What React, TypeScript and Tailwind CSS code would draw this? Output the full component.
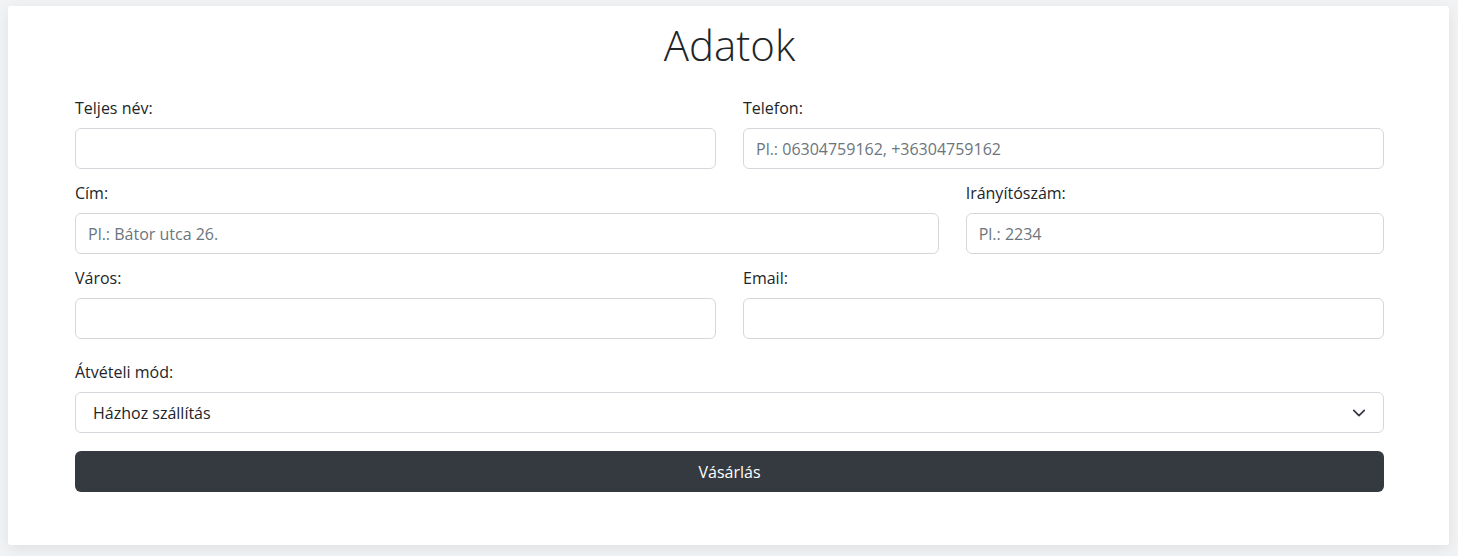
import React from "react";

const font = { fontFamily: '"Open Sans", "Noto Sans", "Liberation Sans", sans-serif' };

function Field({ label, placeholder, span }: { label: string; placeholder?: string; span: string }) {
  return (
    <div className={span}>
      <label className="block text-[16px] leading-6 mb-2 text-[#212529]">{label}</label>
      <input
        type="text"
        placeholder={placeholder}
        className="block w-full h-[41px] rounded-[6px] border border-[#d4d7dc] bg-white px-[12px] text-[16px] text-[#212529] placeholder:text-[#6c757d] outline-none"
      />
    </div>
  );
}

export default function App() {
  return (
    <div className="min-h-screen bg-[#f2f3f5] pt-[6px] pl-[8px] pr-[9px] pb-[11px]" style={font}>
      <div className="bg-white rounded-[3px] shadow-[0_4px_16px_rgba(0,0,0,0.08)] pt-[10px] pl-[67px] pr-[65px] pb-[53px]">
        <h1 className="text-center text-[42px] leading-[58px] font-light text-[#212529] mb-[22px]">Adatok</h1>
        <div className="grid grid-cols-12 gap-x-[27px] gap-y-[12px]">
          <Field span="col-span-6" label="Teljes név:" />
          <Field span="col-span-6" label="Telefon:" placeholder="Pl.: 06304759162, +36304759162" />
          <Field span="col-span-8" label="Cím:" placeholder="Pl.: Bátor utca 26." />
          <Field span="col-span-4" label="Irányítószám:" placeholder="Pl.: 2234" />
          <Field span="col-span-6" label="Város:" />
          <Field span="col-span-6" label="Email:" />
        </div>
        <div className="mt-[21px]">
          <label className="block text-[16px] leading-6 mb-2 text-[#212529]">Átvételi mód:</label>
          <div className="flex items-center justify-between h-[41px] rounded-[6px] border border-[#d4d7dc] bg-white pl-[17px] pr-[17px] text-[16px] text-[#212529]">
            <span>Házhoz szállítás</span>
            <svg width="14" height="14" viewBox="0 0 16 16" fill="none">
              <path d="M2 5l6 6 6-6" stroke="#343a40" strokeWidth="2" strokeLinecap="round" strokeLinejoin="round" />
            </svg>
          </div>
        </div>
        <button className="mt-[18px] w-full h-[41px] rounded-[6px] bg-[#343a40] text-white text-[16px] flex items-center justify-center">
          Vásárlás
        </button>
      </div>
    </div>
  );
}
